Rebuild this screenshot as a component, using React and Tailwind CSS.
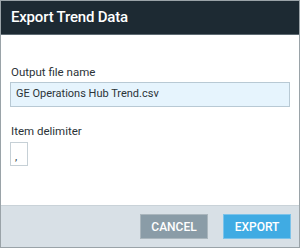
import React from 'react';

export default function App() {
  return (
    <div
      className="w-[300px] h-[248px] flex flex-col border border-[#9aa3a8] bg-white"
      style={{ fontFamily: 'Roboto, "Noto Sans", sans-serif' }}
    >
      {/* Header */}
      <div className="h-[34px] shrink-0 bg-[#1d2a33] border-b border-[#5d6a72] flex items-center pl-[10px]">
        <h1 className="text-[15px] font-medium text-white tracking-[-0.2px]">Export Trend Data</h1>
      </div>

      {/* Body */}
      <div className="flex-1 flex flex-col px-[9px] pt-[30px]">
        <label className="text-[11.5px] text-[#2b3338] leading-[14px] pl-[1px]">Output file name</label>
        <div className="mt-[3px] h-[25px] border border-[#b8c9d4] bg-[#e6f4fd] flex items-center px-[5px]">
          <span className="text-[11px] text-[#2b3338]">GE Operations Hub Trend.csv</span>
        </div>
        <label className="mt-[17px] text-[11.5px] text-[#2b3338] leading-[14px] pl-[1px]">Item delimiter</label>
        <div className="mt-[4px] w-[18px] h-[24px] border border-[#c6d0d6] bg-white flex items-center pl-[4px] pt-[4px]">
          <span className="text-[11px] text-[#2b3338] leading-none">,</span>
        </div>
      </div>

      {/* Footer */}
      <div className="h-[42px] shrink-0 bg-[#d8e0e6] border-t border-[#c9d2d8] flex items-center justify-end gap-[15px] pr-[8px]">
        <button className="w-[68px] h-[25px] bg-[#8a9ca7] border border-[#aab6bd] text-white text-[12px] font-medium">
          CANCEL
        </button>
        <button className="w-[68px] h-[25px] bg-[#40abe3] border border-[#7cc3ea] text-white text-[12px] font-medium">
          EXPORT
        </button>
      </div>
    </div>
  );
}
